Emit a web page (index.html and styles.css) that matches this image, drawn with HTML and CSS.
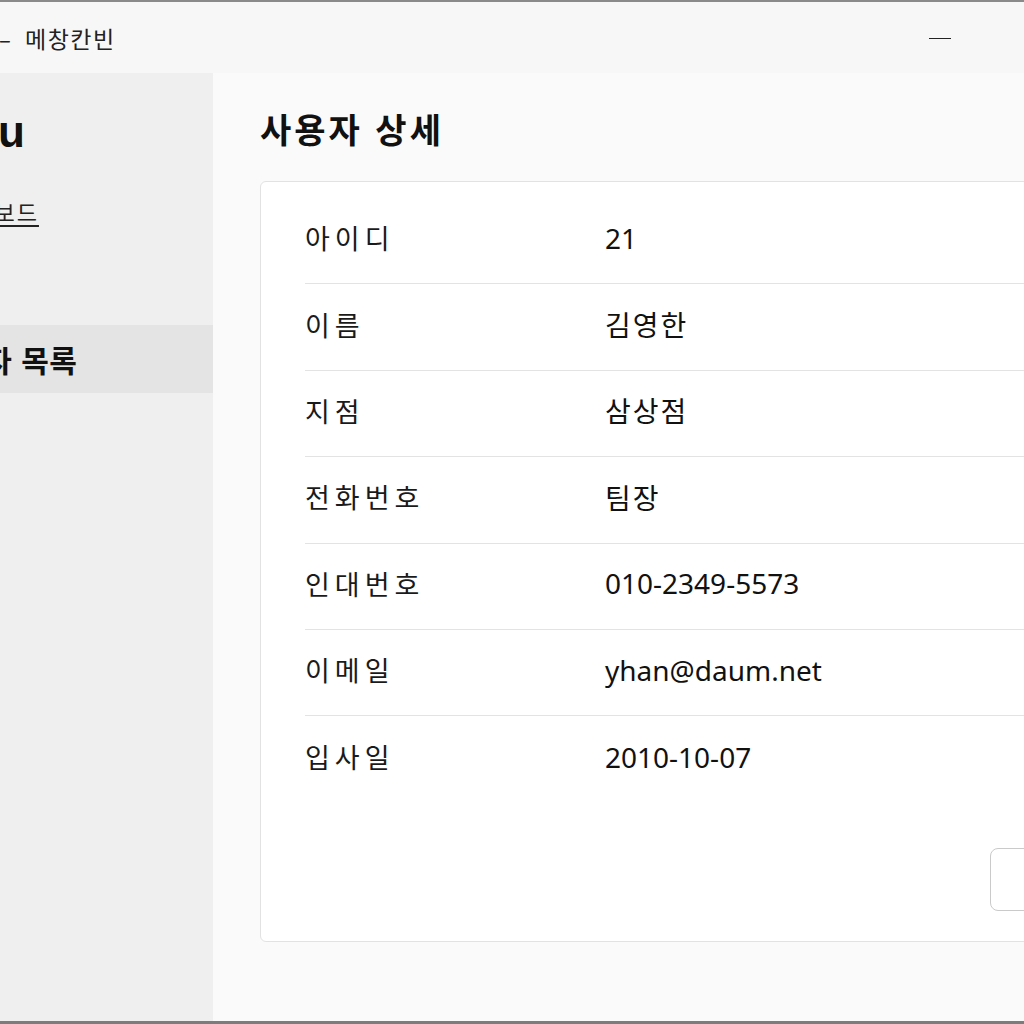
FILE: index.html
```html
<!DOCTYPE html>
<html lang="ko">
<head>
<meta charset="utf-8">
<title>사용자 상세</title>
<link rel="stylesheet" href="styles.css">
</head>
<body>
<div class="window">
  <header class="titlebar">
    <div class="title"><span class="dash">–</span><span class="title-text">메창칸빈</span></div>
    <div class="controls"><span class="minimize"></span></div>
  </header>
  <div class="app">
    <aside class="sidebar">
      <div class="brand">Menu</div>
      <a class="nav-link" href="#">대시보드</a>
      <div class="nav-item active">사용자 목록</div>
    </aside>
    <main class="main">
      <h1 class="heading">사용자 상세</h1>
      <section class="card">
        <div class="row"><div class="label">아이디</div><div class="value">21</div></div>
        <div class="row"><div class="label">이름</div><div class="value ko">김영한</div></div>
        <div class="row"><div class="label">지점</div><div class="value ko">삼상점</div></div>
        <div class="row"><div class="label">전화번호</div><div class="value ko">팀장</div></div>
        <div class="row"><div class="label">인대번호</div><div class="value">010-2349-5573</div></div>
        <div class="row"><div class="label">이메일</div><div class="value">yhan@daum.net</div></div>
        <div class="row last"><div class="label">입사일</div><div class="value">2010-10-07</div></div>
        <div class="actions"><button class="btn">목록</button></div>
      </section>
    </main>
  </div>
</div>
</body>
</html>
```
FILE: styles.css
```css
* { box-sizing: border-box; }
html, body {
  margin: 0;
  padding: 0;
  width: 1024px;
  height: 1024px;
  overflow: hidden;
  background: #fafafa;
}
body {
  font-family: "Noto Sans", "Noto Sans CJK KR", sans-serif;
  color: #111;
}
.window {
  width: 1400px;
  height: 1024px;
  margin-left: -84px;
  border-top: 2px solid #8a8a8a;
  border-bottom: 3px solid #7c7c7c;
  display: flex;
  flex-direction: column;
  background: #fafafa;
}
.titlebar {
  height: 71px;
  flex: none;
  background: #f7f7f7;
  display: flex;
  align-items: center;
  justify-content: space-between;
  padding-left: 83px;
}
.title {
  font-family: "Noto Sans CJK KR", sans-serif;
  font-size: 23px;
  color: #222;
  display: flex;
  align-items: center;
}
.dash { width: 26px; font-size: 22px; }
.title-text { letter-spacing: 1.5px; }
.controls {
  width: 1400px;
  flex: none;
  margin-left: -1400px;
  display: flex;
  padding-left: 1013px;
}
.minimize {
  display: block;
  width: 22px;
  height: 0;
  border-top: 1.5px solid #222;
  margin-top: 2px;
}
.app {
  flex: 1;
  display: flex;
  min-height: 0;
}
.sidebar {
  width: 297px;
  flex: none;
  background: #efefef;
  padding-top: 34px;
  display: flex;
  flex-direction: column;
}
.brand {
  font-family: "Liberation Sans", sans-serif;
  font-weight: 700;
  font-size: 44px;
  line-height: 50px;
  margin-left: -6px;
  color: #111;
}
.nav-link {
  margin-top: 39px;
  margin-left: 34px;
  font-family: "Noto Sans CJK KR", sans-serif;
  font-size: 22px;
  line-height: 30px;
  color: #222;
  text-decoration: underline;
  text-underline-offset: 4px;
  align-self: flex-start;
  letter-spacing: 2px;
}
.nav-item {
  margin-top: 99px;
  height: 68px;
  display: flex;
  align-items: center;
  padding-left: 12px;
  font-family: "Noto Sans CJK KR", sans-serif;
  font-weight: 700;
  font-size: 30px;
  letter-spacing: 0.5px;
  color: #111;
}
.nav-item.active { background: #e4e4e4; }
.main {
  flex: 1;
  padding: 36px 0 0 47px;
  background: #fafafa;
}
.heading {
  margin: 0 0 32px;
  font-family: "Noto Sans CJK KR", sans-serif;
  font-weight: 700;
  font-size: 34px;
  line-height: 40px;
  letter-spacing: 3px;
  color: #111;
}
.card {
  width: 895px;
  background: #fff;
  border: 1px solid #e2e2e2;
  border-radius: 6px;
  padding: 16px 44px 30px 44px;
}
.row {
  display: grid;
  grid-template-columns: 300px 1fr;
  align-items: center;
  height: 86.4px;
  padding-bottom: 6px;
  border-bottom: 1px solid #e3e3e3;
}
.row.last { border-bottom: none; }
.label {
  font-family: "Noto Sans CJK KR", sans-serif;
  font-size: 27px;
  letter-spacing: 5px;
  color: #1a1a1a;
}
.value {
  font-family: "Noto Sans", "Noto Sans CJK KR", sans-serif;
  font-size: 28px;
  color: #111;
}
.value.ko { letter-spacing: 2px; }
.actions {
  display: flex;
  justify-content: flex-end;
  margin-top: 45.6px;
}
.btn {
  width: 120px;
  height: 63px;
  border: 1.5px solid #cacaca;
  border-radius: 8px;
  background: #fff;
  font-family: "Noto Sans CJK KR", sans-serif;
  font-size: 24px;
  color: #111;
}
```
